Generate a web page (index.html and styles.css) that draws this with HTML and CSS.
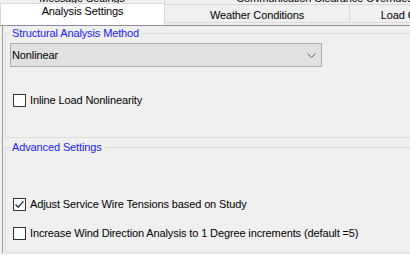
FILE: index.html
```html
<!DOCTYPE html>
<html>
<head>
<meta charset="utf-8">
<link rel="stylesheet" href="styles.css">
</head>
<body>
<div class="tabs">
  <div class="row back">
    <div class="tab btab1"><span>Message Settings</span></div>
    <div class="tab btab2"><span>Communication Clearance Overrides</span></div>
  </div>
  <div class="row front">
    <div class="tab sel">Analysis Settings</div>
    <div class="tab unsel">Weather Conditions</div>
    <div class="tab unsel load">Load Cases</div>
  </div>
</div>
<div class="panel">
  <div class="group g1">
    <span class="title">Structural Analysis Method</span>
    <div class="select">
      <span>Nonlinear</span>
      <svg class="chev" width="9" height="5" viewBox="0 0 9 5"><path d="M0.5 0.5 L4.5 4.5 L8.5 0.5" fill="none" stroke="#606060" stroke-width="1"/></svg>
    </div>
    <label class="check c1"><span class="box"></span><span>Inline Load Nonlinearity</span></label>
  </div>
  <div class="group g2">
    <span class="title">Advanced Settings</span>
    <label class="check c2"><span class="box"><svg width="11" height="11" viewBox="0 0 11 11"><path d="M1.5 5.5 L4.2 8.3 L9.5 2.2" fill="none" stroke="#333" stroke-width="1.3"/></svg></span><span>Adjust Service Wire Tensions based on Study</span></label>
    <label class="check c3"><span class="box"></span><span>Increase Wind Direction Analysis to 1 Degree increments (default =5)</span></label>
  </div>
</div>
</body>
</html>
```
FILE: styles.css
```css
html, body {
  margin: 0;
  padding: 0;
  background: #f0f0f0;
  width: 410px;
  height: 255px;
  overflow: hidden;
  font-family: "Liberation Sans", Arial, sans-serif;
  font-size: 11px;
  letter-spacing: -0.12px;
  color: #000;
}

.tabs {
  width: 600px;
}

.row {
  display: flex;
}

.back {
  height: 3px;
  overflow: hidden;
}

.back .tab {
  margin-top: -10px;
  line-height: 16px;
  height: 16px;
  text-align: center;
  border-right: 1px solid #d9d9d9;
  box-sizing: border-box;
  flex-shrink: 0;
}

.btab1 { width: 165px; }
.btab2 { width: 320px; }

.front {
  height: 22px;
  border-bottom: 1px solid #8e8e9c;
  align-items: flex-start;
}

.front .tab {
  box-sizing: border-box;
  text-align: center;
  line-height: 14px;
  flex-shrink: 0;
}

.sel {
  width: 165px;
  height: 22px;
  background: #fff;
  border: 1px solid #d9d9d9;
  border-bottom: none;
  padding-top: 0;
}

.unsel {
  width: 185px;
  height: 19px;
  margin-top: 1px;
  padding-top: 3px;
  border: 1px solid #d9d9d9;
  border-left: none;
  background: #f0f0f0;
}

.load {
  width: 120px;
}

.panel {
  margin-left: 2px;
  border-left: 1px solid #a0a0a0;
  width: 440px;
  padding: 7px 0 0 2px;
}

.group {
  border: 1px solid #dcdcdc;
  border-right: none;
  display: flex;
  flex-direction: column;
  align-items: flex-start;
}

.title {
  display: inline-block;
  background: #f0f0f0;
  color: #1a1aff;
  line-height: 14px;
  margin: -8px 0 0 4px;
  padding: 0 2px 0 2px;
}

.g1 {
  height: 103px;
}

.g2 {
  margin-top: 9px;
  height: 104px;
}

.select {
  margin: 3px 0 0 4px;
  width: 312px;
  height: 24px;
  box-sizing: border-box;
  border: 1px solid #adadad;
  background: #e1e1e1;
  display: flex;
  align-items: center;
  justify-content: space-between;
  padding: 0 4px 0 1px;
}

.chev {
  margin-right: 1px;
}

.check {
  display: flex;
  align-items: center;
  gap: 4px;
  margin-left: 7px;
  line-height: 14px;
}

.box {
  width: 13px;
  height: 13px;
  box-sizing: border-box;
  border: 1px solid #333;
  background: #fff;
  display: flex;
  align-items: center;
  justify-content: center;
}

.c1 { margin-top: 26px; }
.c2 { margin-top: 43px; }
.c3 { margin-top: 15px; }
```
